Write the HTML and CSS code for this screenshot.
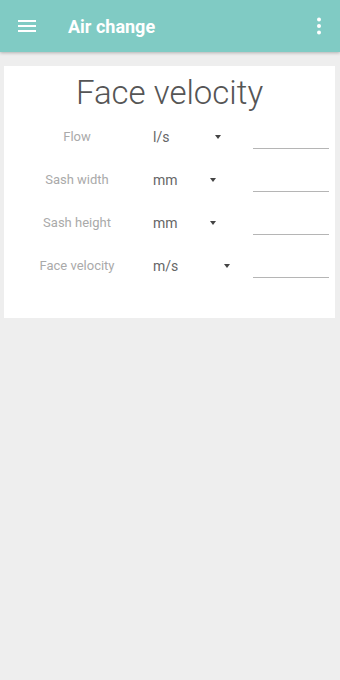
FILE: index.html
```html
<!DOCTYPE html>
<html>

<head>
    <title>Air change</title>
    <meta charset="utf-8">
    <meta name="viewport" content="width=device-width, initial-scale=1.0">
    <link rel="stylesheet" href="styles.css">
</head>

<body>
    <header class="bar">
        <svg class="ikon" width="24" height="24" viewBox="0 0 24 24">
            <path d="M3 6h18v2H3zM3 11h18v2H3zM3 16h18v2H3z" fill="#ffffff" />
        </svg>
        <h1>Air change</h1>
        <svg class="mere" width="24" height="24" viewBox="0 0 24 24">
            <circle cx="12" cy="5.5" r="2" fill="#ffffff" />
            <circle cx="12" cy="12" r="2" fill="#ffffff" />
            <circle cx="12" cy="18.5" r="2" fill="#ffffff" />
        </svg>
    </header>

    <main>
        <div class="kort">
            <h2>Face velocity</h2>
            <div class="felter">
                <div class="navn">Flow</div>
                <div class="valg s-flow"><span>l/s</span><i class="pil"></i></div>
                <div class="felt"><div class="linje"></div></div>

                <div class="navn">Sash width</div>
                <div class="valg s-mm"><span>mm</span><i class="pil"></i></div>
                <div class="felt"><div class="linje"></div></div>

                <div class="navn">Sash height</div>
                <div class="valg s-mm"><span>mm</span><i class="pil"></i></div>
                <div class="felt"><div class="linje"></div></div>

                <div class="navn">Face velocity</div>
                <div class="valg s-ms"><span>m/s</span><i class="pil"></i></div>
                <div class="felt"><div class="linje"></div></div>
            </div>
        </div>
    </main>
</body>

</html>
```

FILE: styles.css
```css
body {
    margin: 0;
    background-color: #eeeeee;
    font-family: Roboto, "Noto Sans", sans-serif;
}

.bar {
    height: 52px;
    background-color: #80cbc4;
    display: flex;
    align-items: center;
    box-shadow: 0 1px 3px rgba(0, 0, 0, 0.25);
}

.ikon {
    margin-left: 15px;
}

.bar h1 {
    margin: 0 0 0 29px;
    color: #ffffff;
    font-size: 18px;
    font-weight: 700;
    flex: 1;
}

.mere {
    margin-right: 9px;
}

main {
    padding: 14px 5px 0 4px;
}

.kort {
    background-color: #ffffff;
    padding: 8px 0 31px 0;
}

.kort h2 {
    margin: 0 0 3px 0;
    text-align: center;
    font-size: 33px;
    line-height: 38px;
    font-weight: 300;
    color: #555555;
}

.felter {
    display: grid;
    grid-template-columns: 146px 103px 76px;
    grid-auto-rows: 43px;
    align-items: center;
}

.navn {
    text-align: center;
    font-size: 13px;
    color: #aaaaaa;
}

.valg {
    display: flex;
    align-items: center;
    padding-left: 3px;
    font-size: 14px;
    color: #666666;
}

.valg span {
    flex: 1;
}

.s-flow {
    width: 68px;
}

.s-mm {
    width: 63px;
}

.s-ms {
    width: 77px;
}

.pil {
    width: 0;
    height: 0;
    border-left: 3.5px solid transparent;
    border-right: 3.5px solid transparent;
    border-top: 4px solid #444444;
}

.felt {
    height: 24px;
}

.linje {
    height: 23px;
    border-bottom: 1px solid #b5b5b5;
}
```
